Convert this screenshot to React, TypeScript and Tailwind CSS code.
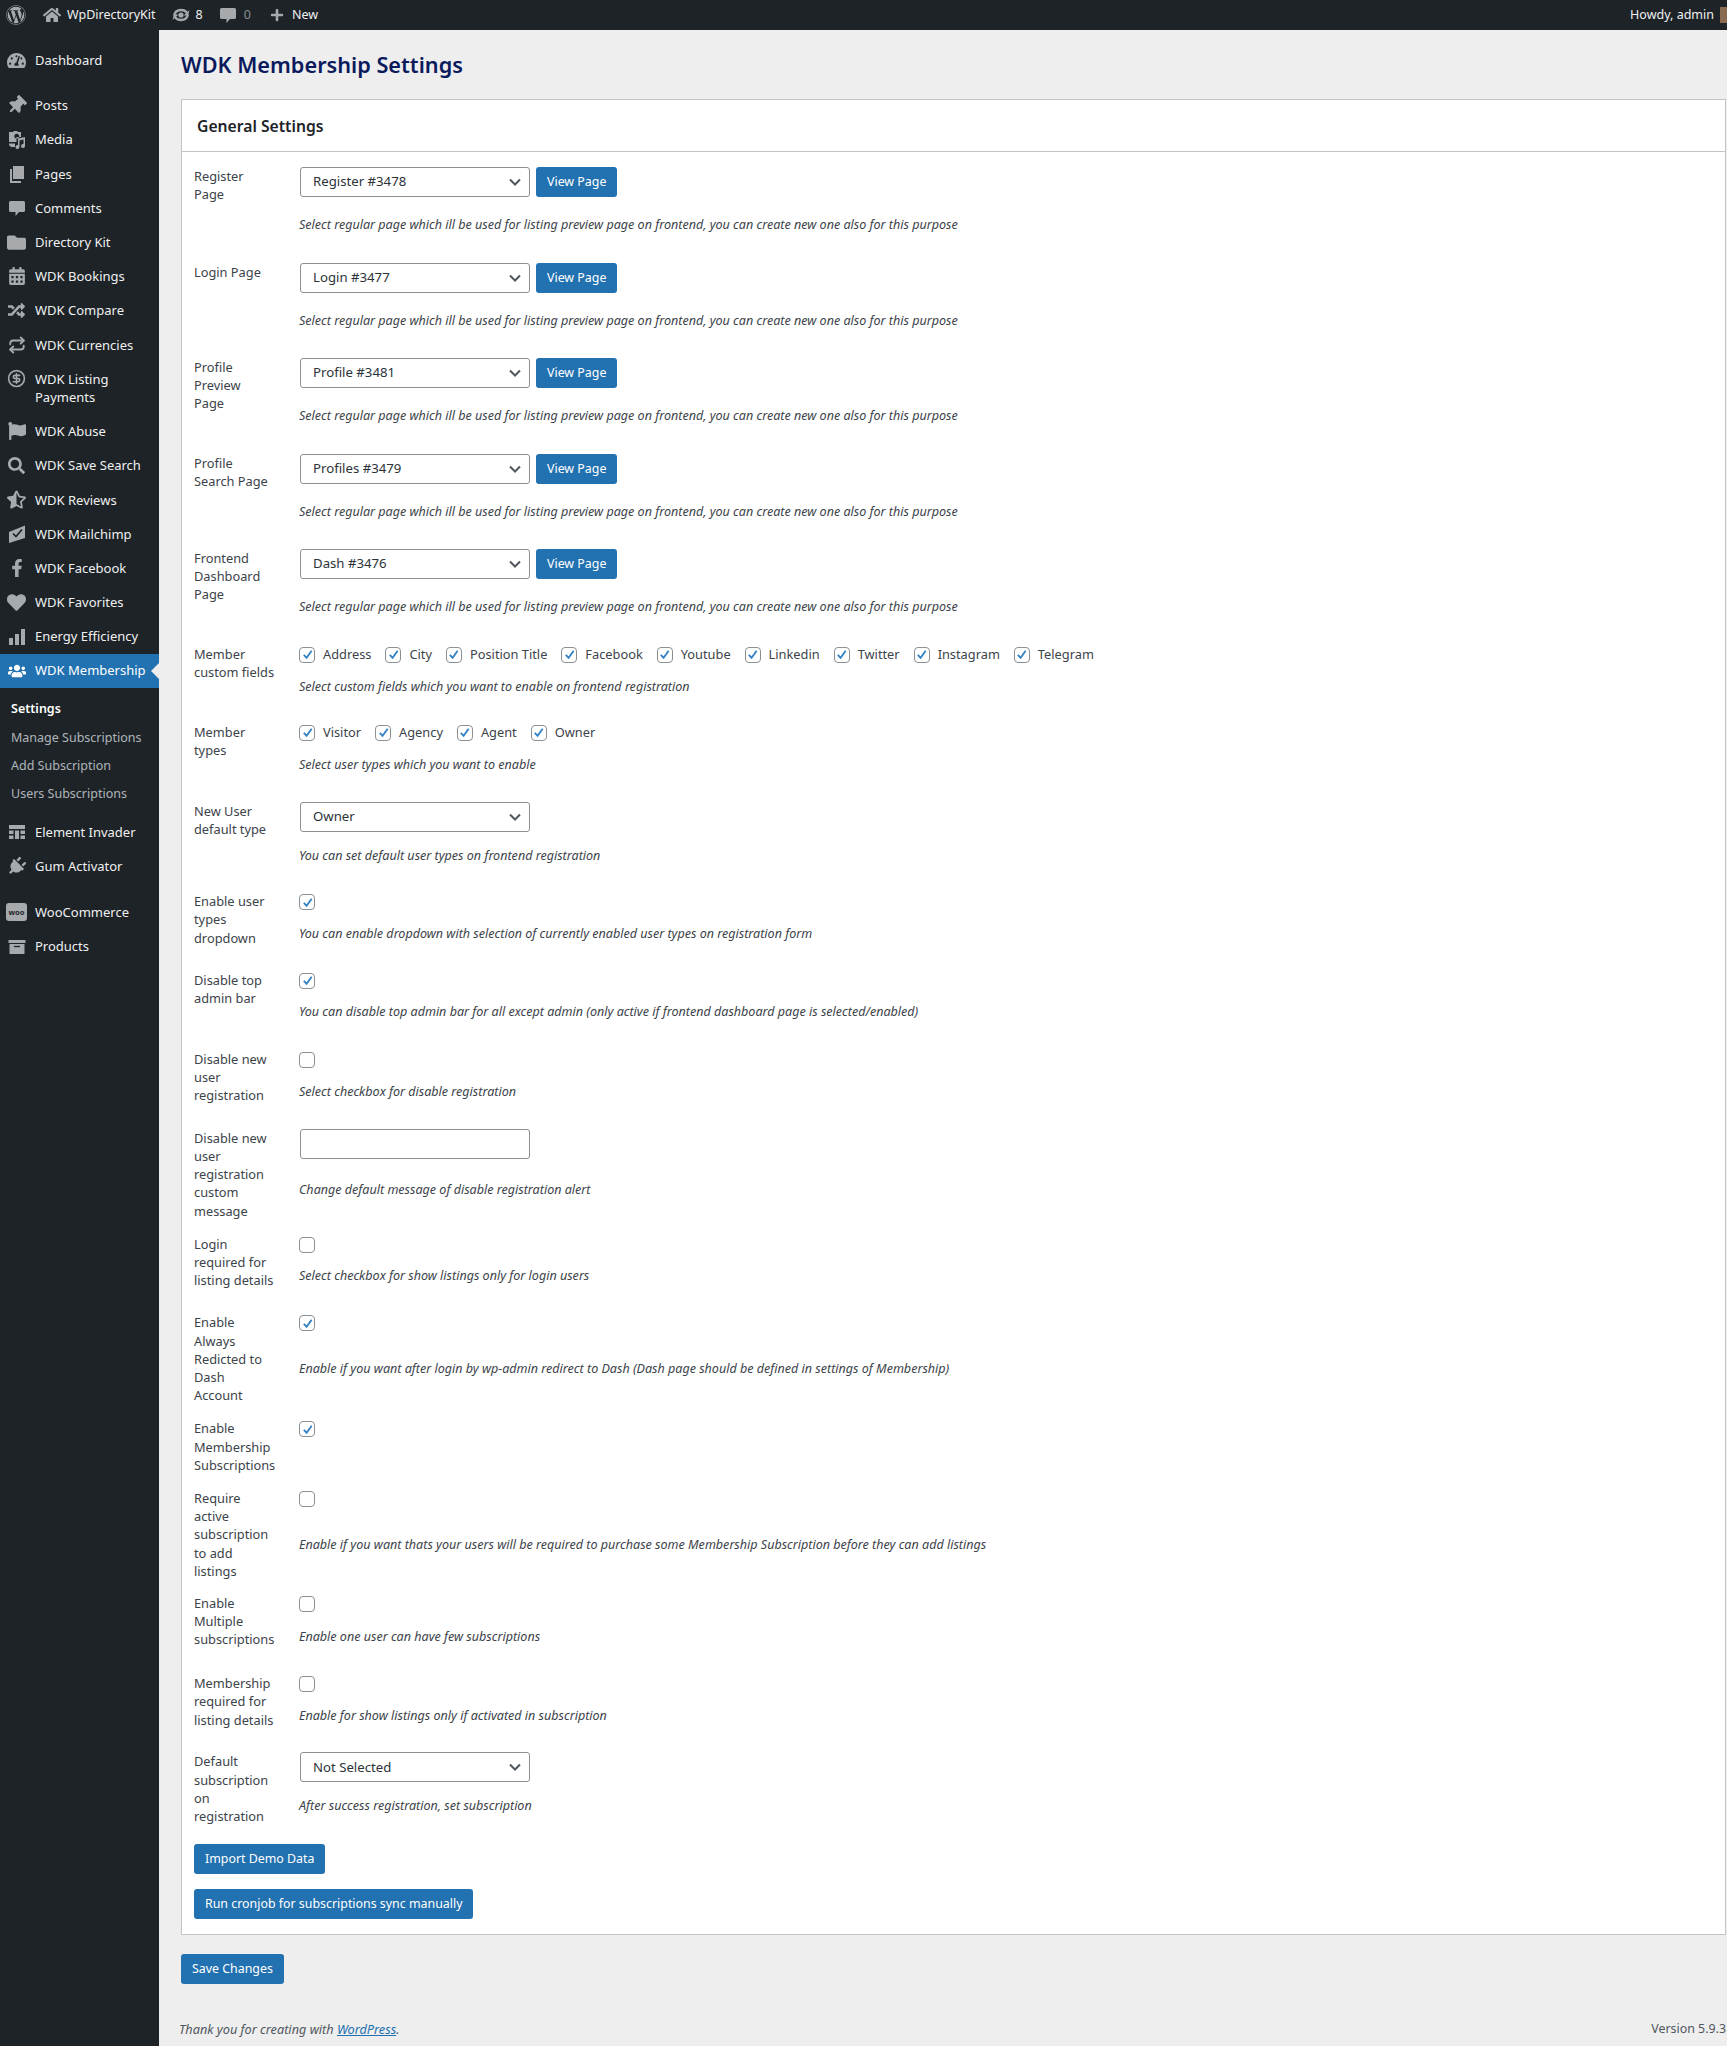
import React from "react";
import {
  FaWordpress, FaHome, FaTachometerAlt, FaThumbtack, FaFolder, FaCalendarAlt, FaRandom, FaFlag,
  FaSearch, FaStarHalfAlt, FaFacebookF, FaHeart, FaUsers, FaPlus, FaPlug,
} from "react-icons/fa";
import { CircleDollarSign, Repeat } from "lucide-react";

const S = ({ children }: { children: React.ReactNode }) => (
  <svg viewBox="0 0 20 20" width="20" height="20" fill="currentColor">{children}</svg>
);
const Comment = () => <S><path d="M3.5 3h13A1.5 1.5 0 0 1 18 4.500v8a1.500 1.500 0 0 1-1.500 1.500H12l-3.500 4v-4h-5A1.500 1.500 0 0 1 2 12.500v-8A1.500 1.500 0 0 1 3.500 3z" /></S>;
const Media = () => <S><path d="M2 2h4l1-1h3l1 1h3v5H9.500v5H2zM8 8a2.500 2.500 0 1 0-.01-.01z" fillRule="evenodd" /><path d="M11 8.500l7-1.500v9a2 2 0 1 1-1.500-1.900V9.500l-4 .9V17a2 2 0 1 1-1.500-1.900z" /><path d="M2 13.500h6V17H4l-2-2z" /></S>;
const Pages = () => <S><path d="M6 2h11v13H6z" /><path d="M3 5h2v12h9v2H3z" /></S>;
const Mail = () => <S><path d="M2 8l16-6.500V14L2 19z" /><path d="M6 9.500l3 3 6-7" fill="none" stroke="#1d2327" strokeWidth="1.700" /></S>;
const Layout = () => <S><path d="M2 3h16v4H2zM2 8.500h4.500V12H2zM8 8.500h4V17H8zM13.500 8.500H18V12h-4.500zM2 13.500h4.500V17H2zM13.500 13.500H18V17h-4.500z" /></S>;
const Bars = () => <S><path d="M2 11h4v7H2zM8 7h4v11H8zM14 2h4v16h-4z" /></S>;
const Box = () => <S><path d="M1.500 3h17v3h-17zM2.500 7h15v10h-15z" /><path d="M7 9.500h6" stroke="#1d2327" strokeWidth="1.300" /></S>;
const Update = () => (
  <svg viewBox="0 0 20 20" width="20" height="20" fill="currentColor">
    <circle cx="10" cy="10" r="2.600" />
    <path d="M3 10.500C4 6.500 7 5 10 5s4.800 1 6 2.800" fill="none" stroke="currentColor" strokeWidth="2.400" />
    <path d="M17 10.500h-4.500L18.500 5z" />
    <path d="M17 9.500C16 13.500 13 15 10 15s-4.800-1-6-2.800" fill="none" stroke="currentColor" strokeWidth="2.400" />
    <path d="M3 9.500h4.500L1.500 15z" />
  </svg>
);
const Woo = () => (
  <span className="flex h-[18px] w-[21px] items-center justify-center rounded-[3px] bg-[#a7aaad] text-[7.500px] font-bold leading-none text-[#1d2327]">woo</span>
);

const fa = "h-[19px] w-[19px]";
type Item = { label: React.ReactNode; icon: React.ReactNode; cls: string };
const menu: Item[] = [
  { label: "Dashboard", icon: <FaTachometerAlt className={fa} />, cls: "mb-[11px]" },
  { label: "Posts", icon: <FaThumbtack className={`${fa} rotate-45`} />, cls: "" },
  { label: "Media", icon: <Media />, cls: "" },
  { label: "Pages", icon: <Pages />, cls: "" },
  { label: "Comments", icon: <Comment />, cls: "" },
  { label: "Directory Kit", icon: <FaFolder className={fa} />, cls: "" },
  { label: "WDK Bookings", icon: <FaCalendarAlt className="h-[18px] w-[18px]" />, cls: "" },
  { label: "WDK Compare", icon: <FaRandom className="h-[17px] w-[17px]" />, cls: "" },
  { label: "WDK Currencies", icon: <Repeat size={18} strokeWidth={2.5} />, cls: "" },
  { label: <>WDK Listing<br />Payments</>, icon: <CircleDollarSign size={19} strokeWidth={2} />, cls: "" },
  { label: "WDK Abuse", icon: <FaFlag className="h-[18px] w-[18px]" />, cls: "" },
  { label: "WDK Save Search", icon: <FaSearch className="h-[17px] w-[17px]" />, cls: "" },
  { label: "WDK Reviews", icon: <FaStarHalfAlt className={fa} />, cls: "" },
  { label: "WDK Mailchimp", icon: <Mail />, cls: "" },
  { label: "WDK Facebook", icon: <FaFacebookF className="h-[18px] w-[18px]" />, cls: "" },
  { label: "WDK Favorites", icon: <FaHeart className={fa} />, cls: "" },
  { label: "Energy Efficiency", icon: <Bars />, cls: "" },
];
const menu2: Item[] = [
  { label: "Element Invader", icon: <Layout />, cls: "" },
  { label: "Gum Activator", icon: <FaPlug className={`${fa} rotate-45`} />, cls: "mb-[12px]" },
  { label: "WooCommerce", icon: <Woo />, cls: "" },
  { label: "Products", icon: <Box />, cls: "" },
];

const MenuRow = ({ item }: { item: Item }) => (
  <div className={`flex items-start py-[8px] ${item.cls}`}>
    <span className="flex h-[18.200px] w-[35px] shrink-0 items-center justify-center pr-[2px] text-[#a7aaad]">{item.icon}</span>
    <span className="leading-[18.200px] text-[#f0f0f1]">{item.label}</span>
  </div>
);

const Sidebar = () => (
  <aside className="w-[159px] shrink-0 bg-[#1d2327] pt-[13px]">
    {menu.map((m, i) => <MenuRow key={i} item={m} />)}
    <div className="relative flex h-[34px] items-center bg-[#2271b1]">
      <span className="flex w-[35px] shrink-0 items-center justify-center pr-[2px] text-white"><FaUsers className="h-[18px] w-[18px]" /></span>
      <span className="text-white">WDK Membership</span>
      <span className="absolute right-0 top-[9px] border-y-[8px] border-r-[8px] border-y-transparent border-r-[#eeeeee]" />
    </div>
    <div className="pb-[6px] pl-[11px] pt-[8px] text-[12.500px] text-[rgba(240,246,252,0.7)]">
      <div className="flex h-[28.300px] items-center font-semibold text-white">Settings</div>
      <div className="flex h-[28.300px] items-center">Manage Subscriptions</div>
      <div className="flex h-[28.300px] items-center">Add Subscription</div>
      <div className="flex h-[28.300px] items-center">Users Subscriptions</div>
    </div>
    {menu2.map((m, i) => <MenuRow key={i} item={m} />)}
  </aside>
);

const TopBar = () => (
  <header className="flex h-[30px] items-center justify-between bg-[#1d2327] text-[12.500px] text-[#f0f0f1]">
    <div className="flex items-center">
      <FaWordpress className="ml-[6px] h-[20px] w-[20px] text-[#a7aaad]" />
      <FaHome className="ml-[17px] h-[18px] w-[18px] text-[#a7aaad]" />
      <span className="ml-[6px]">WpDirectoryKit</span>
      <span className="ml-[15px] flex text-[#a7aaad]"><Update /></span>
      <span className="ml-[5px]">8</span>
      <span className="ml-[15px] flex text-[#a7aaad]"><Comment /></span>
      <span className="ml-[6px] text-[#8c8f94]">0</span>
      <FaPlus className="ml-[19px] h-[14px] w-[14px] text-[#a7aaad]" />
      <span className="ml-[8px]">New</span>
    </div>
    <div className="flex items-center">
      <span>Howdy, admin</span>
      <span className="ml-[6px] h-[16px] w-[7px] bg-[#8a6a4e]" />
    </div>
  </header>
);

const Check = ({ on = true }: { on?: boolean }) => (
  <span className="flex h-[16px] w-[16px] shrink-0 items-center justify-center rounded-[4px] border border-[#8c8f94] bg-white">
    {on && (
      <svg viewBox="0 0 14 14" width="13" height="13" fill="none" stroke="#3582c4" strokeWidth="2">
        <path d="M3 7.500l3 3 5.500-7.500" />
      </svg>
    )}
  </span>
);

const Select = ({ value }: { value: string }) => (
  <div className="ml-[1px] flex h-[30px] w-[230px] items-center justify-between rounded-[3px] border border-[#8c8f94] bg-white pl-[12px] pr-[8px] text-[13.200px] text-[#2c3338]">
    <span>{value}</span>
    <svg viewBox="0 0 12 8" width="12" height="8" fill="none" stroke="#50575e" strokeWidth="2"><path d="M1 1.500l5 5 5-5" /></svg>
  </div>
);

const Btn = ({ children }: { children: React.ReactNode }) => (
  <button className="flex h-[30px] items-center rounded-[3px] bg-[#2271b1] px-[11px] pt-[1px] text-[12.400px] text-white">{children}</button>
);

const Desc = ({ cls, children }: { cls: string; children: React.ReactNode }) => (
  <p className={`text-[12.550px] italic leading-[18.200px] text-[#3c434a] ${cls}`}>{children}</p>
);

const Row = ({ label, lb = "pb-[15px]", cb = "pb-[28px]", children }: { label: React.ReactNode; lb?: string; cb?: string; children: React.ReactNode }) => (
  <div className="flex">
    <div className={`w-[105px] shrink-0 ${lb}`}>
      <div className="w-[82px] text-[12.800px] leading-[18.200px] text-[#3c434a]">{label}</div>
    </div>
    <div className={cb}>{children}</div>
  </div>
);

const long = "Select regular page which ill be used for listing preview page on frontend, you can create new one also for this purpose";

const PageRow = ({ label, value }: { label: React.ReactNode; value: string }) => (
  <Row label={label}>
    <div className="flex gap-[6px]">
      <Select value={value} />
      <Btn>View Page</Btn>
    </div>
    <Desc cls="mt-[19.300px]">{long}</Desc>
  </Row>
);

const Checks = ({ items }: { items: string[] }) => (
  <div className="flex h-[20px] items-center gap-[14px] text-[12.800px] text-[#3c434a]">
    {items.map((t) => (
      <label key={t} className="flex items-center gap-[8px]"><Check />{t}</label>
    ))}
  </div>
);

const CheckRow = ({ label, on, desc, cls, lb, cb }: { label: string; on: boolean; desc?: string; cls: string; lb?: string; cb?: string }) => (
  <Row label={label} lb={lb} cb={cb}>
    <div className="flex h-[20px] items-center"><Check on={on} /></div>
    {desc && <Desc cls={cls}>{desc}</Desc>}
  </Row>
);

export default function App() {
  return (
    <div className="h-[2046px] overflow-hidden bg-[#eeeeee] text-[13px] font-['Noto_Sans',sans-serif]">
      <TopBar />
      <div className="flex h-[2016px]">
        <Sidebar />
        <main className="relative min-w-0 flex-1 pl-[22px] pr-[1px]">
          <h1 className="pt-[19px] text-[21.700px] font-semibold leading-[32px] text-[#0a1a5c]">WDK Membership Settings</h1>
          <section className="mt-[18px] border border-[#c3c4c7] bg-white">
            <h2 className="flex h-[52px] items-center border-b border-[#c3c4c7] pl-[15px] pt-[2px] text-[15.700px] font-semibold text-[#1d2327]">General Settings</h2>
            <div className="px-[12px] pb-[15px] pt-[15px]">
              <PageRow label="Register Page" value="Register #3478" />
              <PageRow label="Login Page" value="Login #3477" />
              <PageRow label={<>Profile<br />Preview<br />Page</>} value="Profile #3481" />
              <PageRow label="Profile Search Page" value="Profiles #3479" />
              <PageRow label="Frontend Dashboard Page" value="Dash #3476" />
              <Row label="Member custom fields" cb="pb-[27px]">
                <Checks items={["Address", "City", "Position Title", "Facebook", "Youtube", "Linkedin", "Twitter", "Instagram", "Telegram"]} />
                <Desc cls="mt-[13px]">Select custom fields which you want to enable on frontend registration</Desc>
              </Row>
              <Row label="Member types">
                <Checks items={["Visitor", "Agency", "Agent", "Owner"]} />
                <Desc cls="mt-[13px]">Select user types which you want to enable</Desc>
              </Row>
              <Row label="New User default type" cb="pb-[27px]">
                <Select value="Owner" />
                <Desc cls="mt-[15px]">You can set default user types on frontend registration</Desc>
              </Row>
              <CheckRow label="Enable user types dropdown" on cls="mt-[12.500px]" desc="You can enable dropdown with selection of currently enabled user types on registration form" />
              <CheckRow label="Disable top admin bar" on cls="mt-[12.500px]" desc="You can disable top admin bar for all except admin (only active if frontend dashboard page is selected/enabled)" />
              <CheckRow label="Disable new user registration" on={false} cls="mt-[13px]" desc="Select checkbox for disable registration" />
              <Row label="Disable new user registration custom message">
                <input className="ml-[1px] block h-[30px] w-[230px] rounded-[3px] border border-[#8c8f94] bg-white" />
                <Desc cls="mt-[22px]">Change default message of disable registration alert</Desc>
              </Row>
              <CheckRow label="Login required for listing details" on={false} cls="mt-[12.500px]" desc="Select checkbox for show listings only for login users" />
              <CheckRow label="Enable Always Redicted to Dash Account" on cls="mt-[26.500px]" desc="Enable if you want after login by wp-admin redirect to Dash (Dash page should be defined in settings of Membership)" />
              <CheckRow label="Enable Membership Subscriptions" on cls="" />
              <CheckRow label="Require active subscription to add listings" on={false} cls="mt-[27px]" lb="pb-[14px]" desc="Enable if you want thats your users will be required to purchase some Membership Subscription before they can add listings" />
              <CheckRow label="Enable Multiple subscriptions" on={false} cls="mt-[14px]" desc="Enable one user can have few subscriptions" />
              <CheckRow label="Membership required for listing details" on={false} cls="mt-[13px]" cb="pb-[27px]" desc="Enable for show listings only if activated in subscription" />
              <Row label="Default subscription on registration">
                <Select value="Not Selected" />
                <Desc cls="mt-[15px]">After success registration, set subscription</Desc>
              </Row>
              <div className="flex flex-col items-start gap-[15px]">
                <Btn>Import Demo Data</Btn>
                <Btn>Run cronjob for subscriptions sync manually</Btn>
              </div>
            </div>
          </section>
          <div className="mt-[19px] flex"><Btn>Save Changes</Btn></div>
          <footer className="mt-[36px] -ml-[2px] flex items-center justify-between leading-[18px] text-[#50575e]">
            <p className="text-[12.700px] italic">Thank you for creating with <a className="text-[#2271b1] underline">WordPress</a>.</p>
            <span className="text-[12.400px]">Version 5.9.3</span>
          </footer>
        </main>
      </div>
    </div>
  );
}
